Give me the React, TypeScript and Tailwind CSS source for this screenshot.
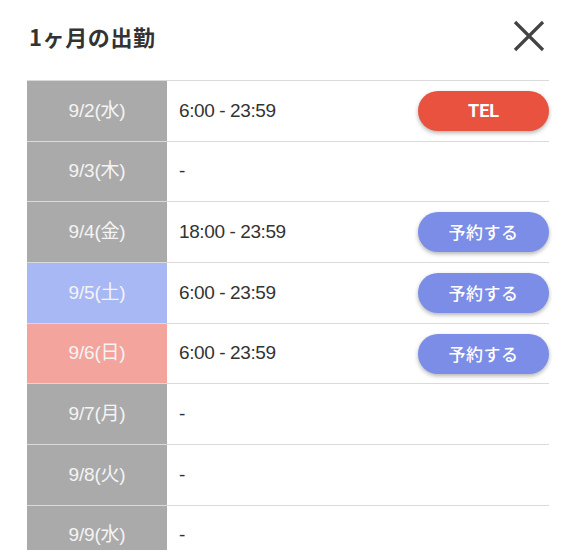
const rows = [
  { date: '9/2(水)', time: '6:00 - 23:59', tone: 'gray', action: 'tel' },
  { date: '9/3(木)', time: '-', tone: 'gray', action: null },
  { date: '9/4(金)', time: '18:00 - 23:59', tone: 'gray', action: 'reserve' },
  { date: '9/5(土)', time: '6:00 - 23:59', tone: 'sat', action: 'reserve' },
  { date: '9/6(日)', time: '6:00 - 23:59', tone: 'sun', action: 'reserve' },
  { date: '9/7(月)', time: '-', tone: 'gray', action: null },
  { date: '9/8(火)', time: '-', tone: 'gray', action: null },
  { date: '9/9(水)', time: '-', tone: 'gray', action: null },
]

const toneClass: Record<string, string> = {
  gray: 'bg-[#aaaaaa]',
  sat: 'bg-[#a8b8f4]',
  sun: 'bg-[#f3a59d]',
}

export default function App() {
  return (
    <div className="w-[576px] h-[550px] overflow-hidden bg-white font-['Liberation_Sans','Noto_Sans_CJK_JP',sans-serif]">
      {/* Header */}
      <div className="flex items-center justify-between pl-[29px] pr-[30px] pt-[18px] h-[80px] pb-[18px]">
        <h2 className="text-[22px] font-bold text-[#333] tracking-[0.6px] font-['Noto_Sans_CJK_JP',sans-serif] leading-none -mt-[9px]">
          1ヶ月の出勤
        </h2>
        <button className="w-[34px] h-[34px] flex items-center justify-center -mt-[9px]">
          <svg width="32" height="32" viewBox="0 0 32 32" fill="none">
            <path d="M2 2 L30 30 M30 2 L2 30" stroke="#444" strokeWidth="3.2" />
          </svg>
        </button>
      </div>

      {/* Schedule table */}
      <div className="ml-[27px] w-[522px]">
        {rows.map((r) => (
          <div key={r.date} className="flex h-[60.7px] border-t border-[#dadada]">
            <div
              className={`w-[140px] shrink-0 flex items-center justify-center text-[19px] tracking-[-0.2px] text-[#f4f4f4] ${toneClass[r.tone]}`}
            >
              {r.date}
            </div>
            <div className="flex-1 flex items-center justify-between pl-[12px]">
              <span className="text-[19px] tracking-[-0.4px] text-[#333]">{r.time}</span>
              {r.action === 'tel' && (
                <button className="w-[131px] h-[40px] rounded-full bg-[#e8523f] text-white text-[18px] font-bold font-['Roboto',sans-serif] shadow-[0_2px_4px_rgba(0,0,0,0.3)]">
                  TEL
                </button>
              )}
              {r.action === 'reserve' && (
                <button className="w-[131px] h-[40px] rounded-full bg-[#7b8de6] text-white text-[17px] font-medium font-['Noto_Sans_CJK_JP',sans-serif] tracking-[0.5px] shadow-[0_2px_4px_rgba(0,0,0,0.3)]">
                  予約する
                </button>
              )}
            </div>
          </div>
        ))}
      </div>
    </div>
  )
}
